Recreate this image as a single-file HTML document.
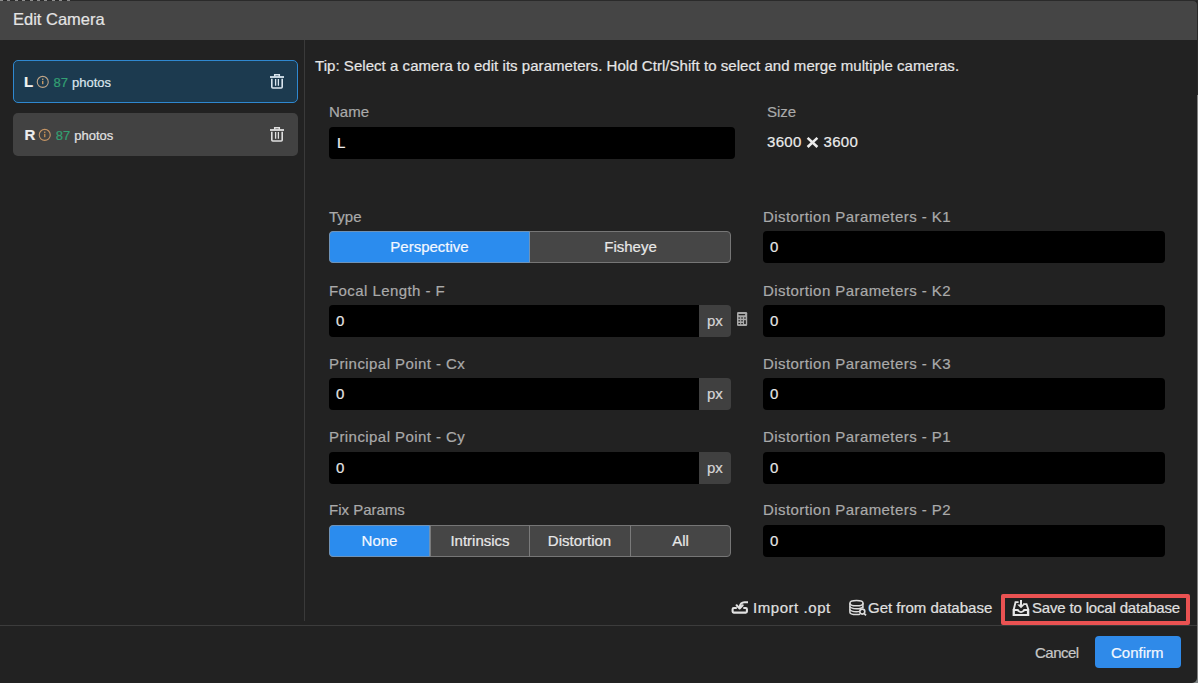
<!DOCTYPE html>
<html><head><meta charset="utf-8">
<style>
*{margin:0;padding:0;box-sizing:border-box}
html,body{width:1198px;height:683px;overflow:hidden;background:#222222}
body{position:relative;font-family:"Liberation Sans",sans-serif;font-size:15px;color:#e6e6e6;-webkit-text-stroke:0.2px currentColor}
.a{position:absolute}
.t{position:absolute;white-space:nowrap;line-height:20px;height:20px}
.hdr{left:0;top:1px;width:1197px;height:39px;background:#454545;border-top-right-radius:4px}
.lbl{color:#aaaaaa}
.inp{position:absolute;background:#000;border-radius:4px;height:32px}
.px{position:absolute;background:#404040;border-radius:0 4px 4px 0;height:32px;width:32px;color:#d6d6d6}
.seg2{position:absolute;height:32px;border:1px solid #767676;border-radius:4px;background:#464646}
.segon{position:absolute;height:32px;background:#2b8cee;border:1px solid #6f93b8}
.st{position:absolute;white-space:nowrap;line-height:20px;height:20px;text-align:center;color:#e8e8e8}
.st.on{color:#f4f8ff}
.card{position:absolute;left:13px;width:285px;height:43px;border-radius:5px}
</style></head>
<body>
<div class="a" style="left:0;top:0;width:1198px;height:1px;background:#2a2a2a"></div>
<div class="a" style="left:0;top:0;width:72px;height:1px;background:repeating-linear-gradient(90deg,#8c8c8c 0,#8c8c8c 3px,#2a2a2a 3px,#2a2a2a 7.4px)"></div>
<div class="a" style="left:1197px;top:0;width:1px;height:95px;background:#2a2a2a"></div>
<div class="a hdr"></div>
<div class="t" style="left:13px;top:9px;font-size:16.5px;color:#e4e4e4">Edit Camera</div>

<!-- left panel cards -->
<div class="card" style="top:60px;background:#1c3a4f;border:1px solid #2f88d0"></div>
<div class="card" style="top:113px;background:#424242"></div>
<!-- card contents -->
<div class="t" style="left:24px;top:72px;font-weight:bold;color:#f2f2f2">L</div>
<svg class="a" style="left:33px;top:73px" width="20" height="18" viewBox="33 73 20 18"><circle cx="42.75" cy="81.9" r="5.5" fill="none" stroke="#bfa487" stroke-width="1.1"/><rect x="42.1" y="78.6" width="1.3" height="1.3" fill="#d8b080"/><rect x="42.1" y="80.8" width="1.3" height="3.4" fill="#d8a468"/></svg>
<div class="t" style="left:53.5px;top:72.5px;font-size:13px;color:#33a073">87</div>
<div class="t" style="left:72px;top:72.5px;font-size:13px;color:#dbe6ee">photos</div>
<svg class="a" style="left:266px;top:70px" width="22" height="22" viewBox="266 70 22 22"><g fill="none" stroke="#d9e5ef"><path d="M274.7,76.5 V74.8 H279.3 V76.5" stroke-width="1.5"/><path d="M270,77 H284" stroke-width="1.8"/><path d="M271.8,78.8 V87 Q271.8,88 272.8,88 H281.2 Q282.2,88 282.2,87 V78.8" stroke-width="1.6"/><path d="M275.6,79 V85.8 M278.4,79 V85.8" stroke-width="1.3"/></g></svg>

<div class="t" style="left:24.5px;top:125px;font-weight:bold;color:#ededed">R</div>
<svg class="a" style="left:35px;top:126px" width="20" height="18" viewBox="33 73 20 18"><circle cx="42.75" cy="81.9" r="5.5" fill="none" stroke="#c49464" stroke-width="1.1"/><rect x="42.1" y="78.6" width="1.3" height="1.3" fill="#d09a60"/><rect x="42.1" y="80.8" width="1.3" height="3.4" fill="#c8904f"/></svg>
<div class="t" style="left:55.8px;top:125.5px;font-size:13px;color:#33a073">87</div>
<div class="t" style="left:74.2px;top:125.5px;font-size:13px;color:#e2e2e2">photos</div>
<svg class="a" style="left:266px;top:123px" width="22" height="22" viewBox="266 70 22 22"><g fill="none" stroke="#e0e0e0"><path d="M274.7,76.5 V74.8 H279.3 V76.5" stroke-width="1.5"/><path d="M270,77 H284" stroke-width="1.8"/><path d="M271.8,78.8 V87 Q271.8,88 272.8,88 H281.2 Q282.2,88 282.2,87 V78.8" stroke-width="1.6"/><path d="M275.6,79 V85.8 M278.4,79 V85.8" stroke-width="1.3"/></g></svg>

<!-- vertical divider -->
<div class="a" style="left:304px;top:40px;width:1px;height:581px;background:#3a3a3a"></div>
<!-- horizontal footer divider -->
<div class="a" style="left:0;top:625px;width:1198px;height:1px;background:#3c3c3c"></div>
<!-- right edge line -->
<div class="a" style="left:1197px;top:95px;width:1px;height:588px;background:#808080"></div>
<div class="a" style="left:1192px;top:678px;width:6px;height:5px;background:#7d8282"></div>
<div class="a" style="left:1186px;top:672px;width:11px;height:11px;background:#222;border-bottom-right-radius:5px"></div>

<div class="t" style="left:315px;top:56px;color:#e6e6e6;letter-spacing:0.045px">Tip: Select a camera to edit its parameters. Hold Ctrl/Shift to select and merge multiple cameras.</div>

<!-- Name / Size -->
<div class="t lbl" style="left:329px;top:102px">Name</div>
<div class="inp" style="left:329px;top:127px;width:406px"></div>
<div class="t" style="left:337px;top:133px;color:#f0f0f0">L</div>
<div class="t lbl" style="left:767px;top:102px">Size</div>
<div class="t" style="left:767px;top:132px;color:#ececec;letter-spacing:0.3px">3600</div>
<svg class="a" style="left:804px;top:134px" width="16" height="16" viewBox="804 134 16 16"><path d="M807.6,137.9 L817.4,147 M817.4,137.9 L807.6,147" stroke="#ececec" stroke-width="2.6" stroke-linecap="butt"/></svg>
<div class="t" style="left:823.5px;top:132px;color:#ececec;letter-spacing:0.3px">3600</div>

<!-- left column rows -->
<div class="t lbl" style="left:329px;top:207px">Type</div>
<div class="seg2" style="left:329px;top:231px;width:402px"></div>
<div class="segon" style="left:329px;top:231px;width:201px;border-radius:4px 0 0 4px"></div>
<div class="st on" style="left:329px;top:237px;width:201px">Perspective</div>
<div class="st" style="left:530px;top:237px;width:201px">Fisheye</div>

<div class="t lbl" style="left:329px;top:281px;letter-spacing:0.43px">Focal Length - F</div>
<div class="inp" style="left:329px;top:305px;width:370px;border-radius:4px 0 0 4px"></div>
<div class="t" style="left:336px;top:311px">0</div>
<div class="px" style="left:699px;top:305px"><div class="t" style="left:8px;top:6px">px</div></div>

<svg class="a" style="left:734px;top:310px" width="16" height="18" viewBox="734 310 16 18"><rect x="737" y="312" width="10.2" height="14" rx="1.3" fill="#a9a9a9"/><g fill="#262626"><rect x="738.4" y="314" width="6.8" height="1.2" rx="0.6"/><rect x="738.4" y="317.2" width="1.7" height="1.6" opacity="0.75"/><rect x="741.2" y="317.2" width="1.7" height="1.6" opacity="0.75"/><rect x="744.1" y="317.2" width="1.7" height="1.6" opacity="0.75"/><rect x="738.4" y="320.2" width="1.7" height="1.2"/><rect x="741.2" y="320.2" width="1.7" height="1.2"/><rect x="744.1" y="320.2" width="1.7" height="3.8"/><rect x="738.4" y="323" width="1.7" height="1.2"/><rect x="741.2" y="323" width="1.7" height="1.2"/></g></svg>
<div class="t lbl" style="left:329px;top:354px;letter-spacing:0.43px">Principal Point - Cx</div>
<div class="inp" style="left:329px;top:378px;width:370px;border-radius:4px 0 0 4px"></div>
<div class="t" style="left:336px;top:384px">0</div>
<div class="px" style="left:699px;top:378px"><div class="t" style="left:8px;top:6px">px</div></div>

<div class="t lbl" style="left:329px;top:427px;letter-spacing:0.43px">Principal Point - Cy</div>
<div class="inp" style="left:329px;top:452px;width:370px;border-radius:4px 0 0 4px"></div>
<div class="t" style="left:336px;top:458px">0</div>
<div class="px" style="left:699px;top:452px"><div class="t" style="left:8px;top:6px">px</div></div>

<div class="t lbl" style="left:329px;top:500px">Fix Params</div>
<div class="seg2" style="left:329px;top:525px;width:402px"></div>
<div class="segon" style="left:329px;top:525px;width:101px;border-radius:4px 0 0 4px"></div>
<div class="a" style="left:430px;top:525px;width:1px;height:32px;background:#7a7a7a"></div>
<div class="a" style="left:529px;top:525px;width:1px;height:32px;background:#7a7a7a"></div>
<div class="a" style="left:630px;top:525px;width:1px;height:32px;background:#7a7a7a"></div>
<div class="st on" style="left:329px;top:531px;width:101px">None</div>
<div class="st" style="left:430px;top:531px;width:100px">Intrinsics</div>
<div class="st" style="left:529px;top:531px;width:101px">Distortion</div>
<div class="st" style="left:630px;top:531px;width:101px">All</div>

<!-- right column rows -->
<div class="t lbl" style="left:763px;top:207px;letter-spacing:0.43px">Distortion Parameters - K1</div>
<div class="inp" style="left:763px;top:231px;width:402px"></div>
<div class="t" style="left:770px;top:237px">0</div>
<div class="t lbl" style="left:763px;top:281px;letter-spacing:0.43px">Distortion Parameters - K2</div>
<div class="inp" style="left:763px;top:305px;width:402px"></div>
<div class="t" style="left:770px;top:311px">0</div>
<div class="t lbl" style="left:763px;top:354px;letter-spacing:0.43px">Distortion Parameters - K3</div>
<div class="inp" style="left:763px;top:378px;width:402px"></div>
<div class="t" style="left:770px;top:384px">0</div>
<div class="t lbl" style="left:763px;top:427px;letter-spacing:0.43px">Distortion Parameters - P1</div>
<div class="inp" style="left:763px;top:452px;width:402px"></div>
<div class="t" style="left:770px;top:458px">0</div>
<div class="t lbl" style="left:763px;top:500px;letter-spacing:0.43px">Distortion Parameters - P2</div>
<div class="inp" style="left:763px;top:525px;width:402px"></div>
<div class="t" style="left:770px;top:531px">0</div>

<!-- action icons -->
<svg class="a" style="left:728px;top:598px" width="24" height="20" viewBox="728 598 24 20"><g fill="none" stroke="#e2e2e2" stroke-width="2.1" stroke-linejoin="round"><path d="M736.8,608 H733.8 Q732.6,608 732.6,609.2 V611.5 Q732.6,612.6 733.7,612.6 H745.8 Q746.9,612.6 746.9,611.5 V609.2 Q746.9,608 745.8,608 H743.3"/><path d="M748,602.2 H744.6 Q740.2,602.2 739.6,607.4" stroke-linecap="butt"/><path d="M736.6,605.3 L739.6,608.5 L742.7,605.3" stroke-linecap="round"/></g></svg>
<svg class="a" style="left:846px;top:597px" width="24" height="21" viewBox="846 597 24 21"><g fill="none" stroke="#dcdcdc" stroke-width="1.5"><ellipse cx="856.5" cy="603.2" rx="6.6" ry="2.6"/><path d="M849.9,603.2 V612.2 Q849.9,614.6 856.5,614.6 Q858.8,614.6 860,614.3"/><path d="M862.9,603.2 V608.3"/><path d="M849.9,606.4 Q850.5,608.6 856.5,608.8 Q862.2,608.6 862.9,606.4"/><path d="M849.9,609.4 Q850.5,611.6 856.5,611.8 Q858.5,611.8 859.6,611.4"/><circle cx="862.3" cy="611.6" r="2.5" fill="#1a1a1a" stroke-width="1.6"/><path d="M864.2,613.6 L866,615.3" stroke-width="1.8"/></g></svg>
<svg class="a" style="left:1010px;top:598px" width="22" height="20" viewBox="1010 598 22 20"><g fill="#e6e6e6"><path d="M1012.8,609.2 L1014.8,601.2 H1018.6 V603 H1016.3 L1014.8,609.2 Z"/><path d="M1023.1,603.2 H1027.2 L1029.2,609.2 H1027.3 L1025.9,605 H1023.1 Z"/><path d="M1012.6,609 H1018.3 Q1019.6,611.3 1021,611.3 Q1022.4,611.3 1023.7,609 H1029.3 V616 H1012.6 Z M1014.9,611.1 V614 H1026.9 V611.1 H1025 Q1023.2,612.9 1021,612.9 Q1018.8,612.9 1017,611.1 Z" fill-rule="evenodd"/><rect x="1020" y="600" width="2" height="5.2"/><path d="M1017.2,604.4 H1024.8 L1021,608.2 Z"/></g></svg>
<!-- action links -->
<div class="t" style="left:753px;top:598px;color:#e0e0e0;letter-spacing:0.55px">Import .opt</div>
<div class="t" style="left:868px;top:598px;color:#e0e0e0">Get from database</div>
<div class="a" style="left:1001px;top:594px;width:189px;height:31px;border:4px solid #ea5252;border-radius:2px"></div>
<div class="t" style="left:1032px;top:598px;color:#e0e0e0;letter-spacing:-0.17px">Save to local database</div>

<!-- footer buttons -->
<div class="t" style="left:1035px;top:642.7px;color:#c8c8c8;letter-spacing:-0.5px">Cancel</div>
<div class="a" style="left:1095px;top:636px;width:86px;height:32px;background:#2f8ae9;border-radius:4px"></div>
<div class="t" style="left:1111px;top:642.7px;color:#f4f8ff">Confirm</div>

</body></html>
